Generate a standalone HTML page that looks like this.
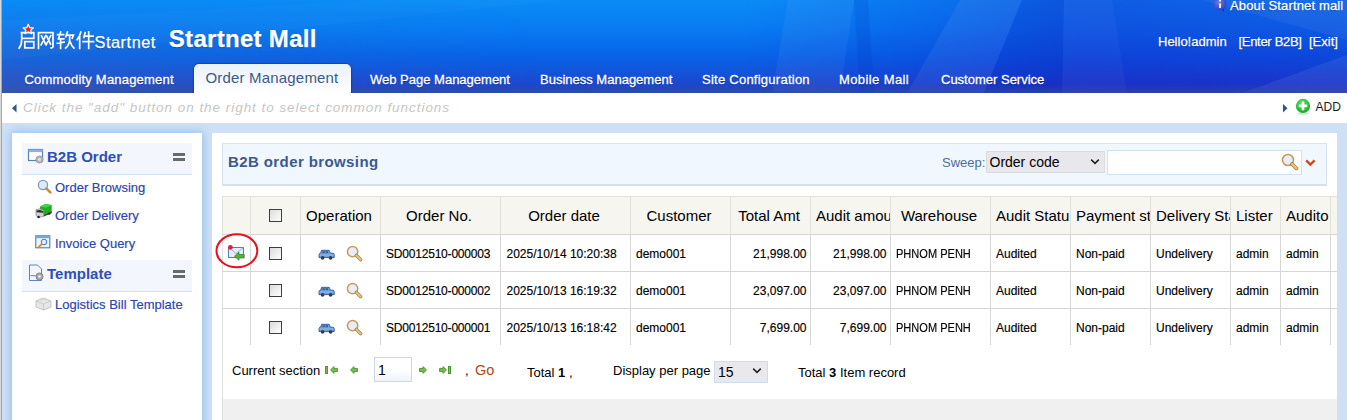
<!DOCTYPE html>
<html><head><meta charset="utf-8">
<style>
*{margin:0;padding:0;box-sizing:border-box}
html,body{width:1347px;height:420px;overflow:hidden}
body{position:relative;font-family:"Liberation Sans",sans-serif;background:#cbdef5;color:#000}
.a{position:absolute;white-space:nowrap;line-height:1}
#lstrip{left:0;top:0;width:2px;height:420px;background:linear-gradient(90deg,#d8d8d8 0,#d8d8d8 1px,#aaa8a6 1px)}
#hdr{left:2px;top:0;width:1345px;height:93px;background:linear-gradient(180deg,#0b8ff4 0%,#0a7eee 25%,#1468dc 55%,#2452c4 85%,#2b4cb6 100%);overflow:hidden}
.wt{color:#fff;text-shadow:0 1px 1px rgba(0,0,40,.35);-webkit-text-stroke:.25px #fff}
.nav{font-size:13px;color:#fff;text-shadow:0 1px 1px rgba(0,0,60,.4);top:73.3px;-webkit-text-stroke:.3px #fff}
#toolbar{left:2px;top:93px;width:1345px;height:30px;background:#fff}
#sidebar{left:12px;top:133px;width:190px;height:300px;background:#fff;box-shadow:0 0 9px 1px rgba(135,185,238,.85)}
#gap{display:none}
#lgap{display:none}
#topgap{left:2px;top:123px;width:1345px;height:297px;background:#cfe0f5}
#main{left:212px;top:133px;width:1125px;height:287px;background:#fff}
.sbh{position:absolute;left:22px;width:170px;height:32px;background:#f3f7fd;border-bottom:1px solid #d6e2f0}
.sbt{font-size:15px;font-weight:bold;color:#2e4fb8}
.sbi{font-size:13px;color:#2a44b0;-webkit-text-stroke:.15px #2a44b0}
.eq{position:absolute;width:12px;height:3px;background:#6a6a6a}
.th{font-size:15px;color:#000;text-align:center;overflow:hidden;padding:0 8px 0 5px}
.td{font-size:12px;color:#000;-webkit-text-stroke:.15px #000}
.cb{width:13px;height:13px;border:1px solid #3e3e3e;background:linear-gradient(135deg,#dcdcdc 0%,#f4f4f4 70%,#fff 100%)}
.pgt{font-size:13px;color:#000}
</style></head><body>
<div id="lstrip" class="a"></div>
<div id="hdr" class="a">
  <svg class="a" style="left:0;top:0" width="1345" height="93">
    <defs>
      <linearGradient id="hb" x1="0" y1="0" x2="0" y2="1">
        <stop offset="0" stop-color="#0a8cf6"/>
        <stop offset=".3" stop-color="#087cf2"/>
        <stop offset=".62" stop-color="#0862e6"/>
        <stop offset=".88" stop-color="#1a4ad0"/>
        <stop offset="1" stop-color="#2244bc"/>
      </linearGradient>
      <linearGradient id="hl" x1="0" y1="0" x2="1" y2="0">
        <stop offset="0" stop-color="#5070b0" stop-opacity=".38"/>
        <stop offset=".22" stop-color="#5070b0" stop-opacity=".12"/>
        <stop offset=".4" stop-color="#5070b0" stop-opacity="0"/>
      </linearGradient>
      <linearGradient id="hr" x1="0" y1="0" x2="1" y2="0">
        <stop offset=".55" stop-color="#0020d8" stop-opacity="0"/>
        <stop offset=".8" stop-color="#1808c0" stop-opacity=".36"/>
        <stop offset="1" stop-color="#1808c0" stop-opacity=".3"/>
      </linearGradient>
      <linearGradient id="hbot" x1="0" y1="0" x2="0" y2="1">
        <stop offset="0" stop-color="#3a5098" stop-opacity="0"/>
        <stop offset=".6" stop-color="#3a5098" stop-opacity=".3"/>
        <stop offset="1" stop-color="#3a5098" stop-opacity=".6"/>
      </linearGradient>
      <linearGradient id="vg" x1="0" y1="0" x2="0" y2="1"><stop offset="0" stop-color="#fff" stop-opacity="0"/><stop offset=".35" stop-color="#fff" stop-opacity=".3"/><stop offset="1" stop-color="#fff" stop-opacity="1"/></linearGradient>
      <mask id="vm"><rect x="0" y="0" width="1345" height="93" fill="url(#vg)"/></mask>
    </defs>
    <rect x="0" y="0" width="1345" height="93" fill="url(#hb)"/>
    <rect x="0" y="0" width="1345" height="93" fill="url(#hl)" mask="url(#vm)"/>
    <rect x="0" y="0" width="1345" height="93" fill="url(#hr)"/>
    <polygon points="0,20 380,0 560,0 0,60" fill="#ffffff" opacity=".025"/>
    <polygon points="786,0 852,0 838,93 770,93" fill="#ffffff" opacity=".05"/>
    <polygon points="852,0 866,0 872,93 858,93" fill="#0028b0" opacity=".14"/>
    <polygon points="958,0 1020,0 982,93 905,93" fill="#ffffff" opacity=".06"/>
    <polygon points="1020,0 1062,0 1060,93 982,93" fill="#0020b0" opacity=".12"/>
    <polygon points="1062,0 1110,0 1125,93 1060,93" fill="#ffffff" opacity=".035"/>
    <polygon points="1240,93 1345,55 1345,93" fill="#ffffff" opacity=".07"/>
    <polygon points="1200,0 1345,0 1345,40" fill="#ffffff" opacity=".05"/>
    <rect x="0" y="85" width="1345" height="8" fill="url(#hbot)"/>
  </svg>
  <!-- logo -->
  <svg class="a" style="left:14px;top:22px" width="80" height="30" viewBox="0 0 80 30">
    <g fill="none" stroke="#fff" stroke-width="1.75" stroke-linecap="square" transform="translate(2.5,9.5)" style="filter:drop-shadow(0 .6px .6px rgba(0,0,60,.35))">
      <!-- qi -->
      <path d="M3,1.2 H15.3 V6.8 H3.2 M3.2,1.2 V8 Q3.2,13.5 0.6,16.6 M6.3,10 H15.3 V16.3 H6.3 Z"/>
      <!-- wang -->
      <g transform="translate(19,0)"><path d="M1,16.8 V1 H15.5 V15 Q15.5,16.6 13.6,16.4 M4,4.5 L8,12.5 M8.2,4.2 L3.6,13.4 M9,4.5 L13,12.5 M13.2,4.2 L8.6,13.4"/></g>
      <!-- ruan -->
      <g transform="translate(38.5,0)"><path d="M0.6,3.2 H6.6 M3.6,0.6 L1.5,7.4 H6.8 M3.6,7.4 V16.8 M0.4,11.8 L7,10.6 M10.4,0.5 L8.8,5.2 M9.6,3.6 H16.4 L15.2,6.6 M12.6,3.8 V8.5 Q12.3,13.5 8.6,16.6 M12.8,9.5 Q14.3,14.2 17,16.6"/></g>
      <!-- jian -->
      <g transform="translate(58,0)"><path d="M4.4,0.5 Q3.2,5 0.6,8.2 M3.2,5.2 V16.8 M8.6,1.2 L7.4,6 M7.8,4.6 H16.6 M6.6,10.2 H17 M12.2,0.4 V16.8"/></g>
    </g>
    <!-- star -->
    <polygon transform="translate(-1.8,-.3) scale(1.08)" points="13,2.4 14.4,5.5 17.8,5.7 15.2,7.9 16.1,11.1 13,9.3 9.9,11.1 10.8,7.9 8.2,5.7 11.6,5.5" fill="#f21a1a" stroke="#fff" stroke-width="1.1" stroke-linejoin="round"/>
  </svg>
  <div class="a wt" style="left:92.5px;top:33.8px;font-size:16.3px;letter-spacing:.55px">Startnet</div>
  <div class="a wt" style="left:166.8px;top:26.7px;font-size:24px;font-weight:bold;letter-spacing:.3px">Startnet Mall</div>
  <!-- about -->
  <svg class="a" style="left:1209px;top:-4px" width="18" height="17" viewBox="0 0 18 17">
    <defs><radialGradient id="ig" cx=".42" cy=".4" r=".65"><stop offset="0" stop-color="#6c7ee8"/><stop offset=".8" stop-color="#3a4cc8"/><stop offset="1" stop-color="#2434a8"/></radialGradient></defs>
    <path d="M10.5,13.6 L13,16 L12.6,12.6 Z" fill="#1a2890"/>
    <circle cx="9" cy="7.8" r="6.4" fill="url(#ig)"/>
    <rect x="8.1" y="7.4" width="1.9" height="4.6" fill="#fbf6d8"/><rect x="8.1" y="3.4" width="1.9" height="2" fill="#ffffff"/>
  </svg>
  <div class="a wt" style="left:1228px;top:-1px;font-size:13px;letter-spacing:.15px">About Startnet mall</div>
  <div class="a wt" style="left:1156px;top:34.5px;font-size:13px">Hello!admin</div>
  <div class="a wt" style="left:1236.5px;top:34.5px;font-size:13px;letter-spacing:-.3px">[Enter B2B]</div>
  <div class="a wt" style="left:1307px;top:34.5px;font-size:13px">[Exit]</div>
  <!-- nav -->
  <div class="a nav" style="left:22.5px;letter-spacing:.2px">Commodity Management</div>
  <div class="a" style="left:191.5px;top:64px;width:157px;height:30px;border-radius:5px 5px 0 0;background:linear-gradient(180deg,#eaf1fb 0%,#f4f8fd 50%,#ffffff 100%);box-shadow:0 0 1px 1px rgba(20,40,110,.45)"></div>
  <div class="a" style="left:203.5px;top:70.3px;font-size:15px;letter-spacing:.18px;color:#3d5a86">Order Management</div>
  <div class="a nav" style="left:368px">Web Page Management</div>
  <div class="a nav" style="left:538px">Business Management</div>
  <div class="a nav" style="left:700px;letter-spacing:.25px">Site Configuration</div>
  <div class="a nav" style="left:837px;letter-spacing:.4px">Mobile Mall</div>
  <div class="a nav" style="left:939px">Customer Service</div>
</div>
<div id="toolbar" class="a">
  <svg class="a" style="left:10px;top:11px" width="5" height="9"><polygon points="4.5,0 4.5,8.5 0,4.25" fill="#2d5591"/></svg>
  <div class="a" style="left:21px;top:8.3px;font-size:13.5px;font-style:italic;letter-spacing:.96px;color:#c6c6c6">Click the "add" button on the right to select common functions</div>
  <svg class="a" style="left:1281px;top:11px" width="5" height="9"><polygon points="0,0 0,8.5 4.5,4.25" fill="#2d5591"/></svg>
  <svg class="a" style="left:1292px;top:5px" width="18" height="18" viewBox="0 0 18 18">
    <defs><radialGradient id="gg" cx=".45" cy=".35" r=".7"><stop offset="0" stop-color="#5ee85e"/><stop offset="1" stop-color="#0ca52a"/></radialGradient></defs>
    <ellipse cx="9" cy="15.5" rx="6" ry="1.5" fill="#000" opacity=".12"/>
    <circle cx="9" cy="7.9" r="7.1" fill="url(#gg)"/>
    <rect x="7.7" y="3.6" width="2.6" height="8.6" fill="#fff" rx=".4"/>
    <rect x="4.7" y="6.6" width="8.6" height="2.6" fill="#fff" rx=".4"/>
  </svg>
  <div class="a" style="left:1313.5px;top:7.5px;font-size:12px;color:#1a1a1a">ADD</div>
</div>
<div id="topgap" class="a"></div>
<div id="lgap" class="a"></div>
<div id="gap" class="a"></div>
<div id="sidebar" class="a"></div>
<div id="main" class="a"></div>

<!-- sidebar contents -->
<div class="sbh" style="top:143px"></div>
<svg class="a" style="left:27px;top:148px" width="18" height="16" viewBox="0 0 18 16">
  <rect x="1.5" y="1.5" width="14" height="11" fill="#fff" stroke="#5a7ec0" stroke-width="1.2"/>
  <rect x="1.5" y="1.5" width="14" height="2.6" fill="#8cb0e0"/>
  <circle cx="12.5" cy="11.5" r="3.6" fill="#b8b8b8" stroke="#909090" stroke-width=".8"/>
  <circle cx="12.5" cy="11.5" r="1.3" fill="#e8e8e8"/>
</svg>
<div class="a sbt" style="left:47px;top:149px">B2B Order</div>
<div class="eq" style="left:173px;top:153px"></div><div class="eq" style="left:173px;top:158px"></div>
<svg class="a" style="left:37px;top:179px" width="16" height="15" viewBox="0 0 16 15">
  <circle cx="6" cy="6" r="4.6" fill="#dfeaf8" stroke="#7a9ac8" stroke-width="1.3"/>
  <path d="M9.3,9.3 L13.3,13.3" stroke="#c88a3a" stroke-width="2.6" stroke-linecap="round"/>
</svg>
<div class="a sbi" style="left:55px;top:181px">Order Browsing</div>
<svg class="a" style="left:34px;top:202px" width="20" height="17" viewBox="0 0 20 17">
  <path d="M9.7,12 L17.7,9 V11.2 L9.7,14.4 Z" fill="#3a3a3a"/>
  <polygon points="6,4.6 11.4,2 17.7,3.1 17.7,9.7 9.7,13 6,11" fill="#1fae1f"/>
  <polygon points="6,4.6 11.4,2 17.7,3.1 12,5.8" fill="#46d246"/>
  <path d="M2,7.6 L6,6.8 L9.7,8.2 V14.6 L4,15.2 L2,13.6 Z" fill="#d0d0d0" stroke="#7a7a7a" stroke-width=".6"/>
  <path d="M2.5,8.6 L6,8 L9.4,9.2 V10.8 L2.5,10.2 Z" fill="#2e2e2e"/>
  <circle cx="4.6" cy="15" r="1.3" fill="#222"/><circle cx="15.2" cy="11.6" r="1.2" fill="#222"/>
</svg>
<div class="a sbi" style="left:55px;top:209px">Order Delivery</div>
<svg class="a" style="left:35px;top:235px" width="16" height="14" viewBox="0 0 16 14">
  <rect x=".8" y=".8" width="14" height="12" fill="#eef4fc" stroke="#4a78c0" stroke-width="1.1"/>
  <rect x=".8" y=".8" width="14" height="2.4" fill="#7aa4dc"/>
  <circle cx="9" cy="7" r="2.8" fill="#dfeeff" stroke="#3a78c8" stroke-width="1"/>
  <path d="M7,9 L3.5,12" stroke="#d89020" stroke-width="1.8"/>
</svg>
<div class="a sbi" style="left:55px;top:237px">Invoice Query</div>
<div class="sbh" style="top:260px"></div>
<svg class="a" style="left:28px;top:264px" width="17" height="18" viewBox="0 0 17 18">
  <path d="M1.5,1 H9.5 L13.5,5 V16.5 H1.5 Z" fill="#f2f6fc" stroke="#5a86c8" stroke-width="1"/>
  <rect x="2.5" y="11" width="5" height="1.2" fill="#6a9ad8"/>
  <circle cx="11.5" cy="12.5" r="3.6" fill="#a8a8a8" stroke="#777" stroke-width=".8"/>
  <circle cx="11.5" cy="12.5" r="1.3" fill="#eee"/>
</svg>
<div class="a sbt" style="left:47px;top:266px">Template</div>
<div class="eq" style="left:173px;top:270px"></div><div class="eq" style="left:173px;top:275px"></div>
<svg class="a" style="left:35px;top:296px" width="17" height="15" viewBox="0 0 17 15">
  <path d="M1,5 L8.5,2 L16,5 V11 L8.5,14 L1,11 Z" fill="#e6e6e6" stroke="#b8b8b8" stroke-width=".8"/>
  <path d="M1,5 L8.5,8 L16,5 M8.5,8 V14" fill="none" stroke="#c4c4c4" stroke-width=".8"/>
  <ellipse cx="6" cy="3.6" rx="2" ry="1" fill="#d4d4d4"/><ellipse cx="11" cy="3.6" rx="2" ry="1" fill="#d4d4d4"/>
</svg>
<div class="a sbi" style="left:55px;top:298px">Logistics Bill Template</div>

<!-- main contents -->
<svg width="0" height="0" style="position:absolute">
  <defs>
    <g id="car">
      <path d="M2.6,4.2 L3.6,1.3 H11.2 L12.3,4.2 H15 Q16.2,4.3 16.2,5.6 V8.6 H1 V5.6 Q1,4.3 2.6,4.2 Z" fill="#6aa0de" stroke="#285a9c" stroke-width=".9"/>
      <path d="M1.6,6 H15.6" stroke="#9cc4f0" stroke-width=".8"/>
      <rect x="4.4" y="2.2" width="2.4" height="1.9" fill="#3c5f8a"/><rect x="7.6" y="2.2" width="2.4" height="1.9" fill="#3c5f8a"/>
      <circle cx="4.6" cy="8.9" r="1.8" fill="#3a3a3a"/><circle cx="12.6" cy="8.9" r="1.8" fill="#3a3a3a"/>
    </g>
    <g id="mag">
      <circle cx="6.6" cy="6.6" r="5.2" fill="#e6eef9" stroke="#c89a5a" stroke-width="1.5"/>
      <path d="M10.4,10.4 L14.6,14.6" stroke="#a87838" stroke-width="3.4" stroke-linecap="round"/>
      <path d="M10.4,10.4 L14.6,14.6" stroke="#e2c88a" stroke-width="2" stroke-linecap="round"/>
    </g>
    <g id="pg"><path d="M0.6,4 L3.9,0.6 V2.4 H7.4 V5.6 H3.9 V7.4 Z" fill="#78bc4c" stroke="#4e9a30" stroke-width="1"/></g>
  </defs>
</svg>
<div class="a" style="left:222px;top:143px;width:1105px;height:42.5px;background:#f1f7fe;border:1px solid #d6e4f3;border-bottom:2px solid #d3e1f1"></div>
<div class="a" style="left:228px;top:154px;font-size:15px;font-weight:bold;color:#3b5a8e;letter-spacing:.4px">B2B order browsing</div>
<div class="a" style="left:942px;top:156px;font-size:13px;color:#4d6c9c">Sweep:</div>
<div class="a" style="left:986px;top:151px;width:119px;height:22px;background:#e8e7eb;border:1px solid #dcdcdf"></div>
<div class="a" style="left:989.5px;top:154.5px;font-size:14px;color:#000">Order code</div>
<svg class="a" style="left:1090px;top:158px" width="10" height="8"><path d="M1.2,1.6 L5,5.4 L8.8,1.6" fill="none" stroke="#222" stroke-width="1.5"/></svg>
<div class="a" style="left:1107px;top:150px;width:195px;height:25px;background:#fff;border:1px solid #d4e2f0"></div>
<svg class="a" style="left:1281px;top:153px" width="18" height="18" viewBox="0 0 17 17"><use href="#mag"/></svg>
<svg class="a" style="left:1305px;top:159px" width="11" height="8"><path d="M1.2,1.4 L5.3,5.6 L9.6,1.4" fill="none" stroke="#e0420e" stroke-width="2.4"/></svg>
<div class="a" style="left:222px;top:196px;width:1115px;height:38px;background:#f6f5f0;border-top:1px solid #e4e2dc"></div>
<div class="a" style="left:222px;top:196px;width:1px;height:38px;background:#e2e0da"></div>
<div class="a" style="left:250px;top:196px;width:1px;height:38px;background:#e2e0da"></div>
<div class="a" style="left:300px;top:196px;width:1px;height:38px;background:#e2e0da"></div>
<div class="a" style="left:380px;top:196px;width:1px;height:38px;background:#e2e0da"></div>
<div class="a" style="left:500px;top:196px;width:1px;height:38px;background:#e2e0da"></div>
<div class="a" style="left:630px;top:196px;width:1px;height:38px;background:#e2e0da"></div>
<div class="a" style="left:730px;top:196px;width:1px;height:38px;background:#e2e0da"></div>
<div class="a" style="left:810px;top:196px;width:1px;height:38px;background:#e2e0da"></div>
<div class="a" style="left:890px;top:196px;width:1px;height:38px;background:#e2e0da"></div>
<div class="a" style="left:990px;top:196px;width:1px;height:38px;background:#e2e0da"></div>
<div class="a" style="left:1070px;top:196px;width:1px;height:38px;background:#e2e0da"></div>
<div class="a" style="left:1150px;top:196px;width:1px;height:38px;background:#e2e0da"></div>
<div class="a" style="left:1230px;top:196px;width:1px;height:38px;background:#e2e0da"></div>
<div class="a" style="left:1280px;top:196px;width:1px;height:38px;background:#e2e0da"></div>
<div class="a" style="left:1330px;top:196px;width:1px;height:38px;background:#e2e0da"></div>
<div class="a" style="left:222px;top:234px;width:1px;height:111px;background:#e2e0da"></div>
<div class="a" style="left:250px;top:234px;width:1px;height:111px;background:#d6d6d6"></div>
<div class="a" style="left:300px;top:234px;width:1px;height:111px;background:#d6d6d6"></div>
<div class="a" style="left:380px;top:234px;width:1px;height:111px;background:#d6d6d6"></div>
<div class="a" style="left:500px;top:234px;width:1px;height:111px;background:#d6d6d6"></div>
<div class="a" style="left:630px;top:234px;width:1px;height:111px;background:#d6d6d6"></div>
<div class="a" style="left:730px;top:234px;width:1px;height:111px;background:#d6d6d6"></div>
<div class="a" style="left:810px;top:234px;width:1px;height:111px;background:#d6d6d6"></div>
<div class="a" style="left:890px;top:234px;width:1px;height:111px;background:#d6d6d6"></div>
<div class="a" style="left:990px;top:234px;width:1px;height:111px;background:#d6d6d6"></div>
<div class="a" style="left:1070px;top:234px;width:1px;height:111px;background:#d6d6d6"></div>
<div class="a" style="left:1150px;top:234px;width:1px;height:111px;background:#d6d6d6"></div>
<div class="a" style="left:1230px;top:234px;width:1px;height:111px;background:#d6d6d6"></div>
<div class="a" style="left:1280px;top:234px;width:1px;height:111px;background:#d6d6d6"></div>
<div class="a" style="left:1330px;top:234px;width:1px;height:111px;background:#d6d6d6"></div>
<div class="a" style="left:222px;top:234px;width:1115px;height:1px;background:#d6d6d6"></div>
<div class="a" style="left:222px;top:271px;width:1115px;height:1px;background:#d6d6d6"></div>
<div class="a" style="left:222px;top:308px;width:1115px;height:1px;background:#d6d6d6"></div>
<div class="a th" style="left:301px;top:208.3px;width:79px;">Operation</div>
<div class="a th" style="left:381px;top:208.3px;width:119px;">Order No.</div>
<div class="a th" style="left:501px;top:208.3px;width:129px;">Order date</div>
<div class="a th" style="left:631px;top:208.3px;width:99px;">Customer</div>
<div class="a th" style="left:731px;top:208.3px;width:79px;">Total Amt</div>
<div class="a th" style="left:811px;top:208.3px;width:79px;">Audit amount</div>
<div class="a th" style="left:891px;top:208.3px;width:99px;">Warehouse</div>
<div class="a th" style="left:991px;top:208.3px;width:79px;">Audit Status</div>
<div class="a th" style="left:1071px;top:208.3px;width:79px;">Payment status</div>
<div class="a th" style="left:1151px;top:208.3px;width:79px;">Delivery Status</div>
<div class="a th" style="left:1231px;top:208.3px;width:49px;">Lister</div>
<div class="a th" style="left:1281px;top:208.3px;width:49px;">Audito</div>
<div class="a cb" style="left:269px;top:209px"></div>
<div class="a cb" style="left:269px;top:247px"></div>
<svg class="a" style="left:318px;top:249px" width="17" height="11" viewBox="0 0 17 11"><use href="#car"/></svg>
<svg class="a" style="left:346px;top:245px" width="17" height="17" viewBox="0 0 17 17"><use href="#mag"/></svg>
<div class="a td" style="left:386px;top:247.7px;letter-spacing:-.2px">SD0012510-000003</div>
<div class="a td" style="left:506.5px;top:247.7px">2025/10/14 10:20:38</div>
<div class="a td" style="left:636px;top:247.7px">demo001</div>
<div class="a td" style="left:731px;top:247.7px;width:75.5px;text-align:right">21,998.00</div>
<div class="a td" style="left:811px;top:247.7px;width:75.5px;text-align:right">21,998.00</div>
<div class="a td" style="left:896px;top:247.7px;transform:scaleX(.92);transform-origin:0 0">PHNOM PENH</div>
<div class="a td" style="left:996px;top:247.7px">Audited</div>
<div class="a td" style="left:1076px;top:247.7px">Non-paid</div>
<div class="a td" style="left:1156px;top:247.7px">Undelivery</div>
<div class="a td" style="left:1236px;top:247.7px">admin</div>
<div class="a td" style="left:1286px;top:247.7px">admin</div>
<div class="a cb" style="left:269px;top:284px"></div>
<svg class="a" style="left:318px;top:286px" width="17" height="11" viewBox="0 0 17 11"><use href="#car"/></svg>
<svg class="a" style="left:346px;top:282px" width="17" height="17" viewBox="0 0 17 17"><use href="#mag"/></svg>
<div class="a td" style="left:386px;top:284.7px;letter-spacing:-.2px">SD0012510-000002</div>
<div class="a td" style="left:506.5px;top:284.7px">2025/10/13 16:19:32</div>
<div class="a td" style="left:636px;top:284.7px">demo001</div>
<div class="a td" style="left:731px;top:284.7px;width:75.5px;text-align:right">23,097.00</div>
<div class="a td" style="left:811px;top:284.7px;width:75.5px;text-align:right">23,097.00</div>
<div class="a td" style="left:896px;top:284.7px;transform:scaleX(.92);transform-origin:0 0">PHNOM PENH</div>
<div class="a td" style="left:996px;top:284.7px">Audited</div>
<div class="a td" style="left:1076px;top:284.7px">Non-paid</div>
<div class="a td" style="left:1156px;top:284.7px">Undelivery</div>
<div class="a td" style="left:1236px;top:284.7px">admin</div>
<div class="a td" style="left:1286px;top:284.7px">admin</div>
<div class="a cb" style="left:269px;top:321px"></div>
<svg class="a" style="left:318px;top:323px" width="17" height="11" viewBox="0 0 17 11"><use href="#car"/></svg>
<svg class="a" style="left:346px;top:319px" width="17" height="17" viewBox="0 0 17 17"><use href="#mag"/></svg>
<div class="a td" style="left:386px;top:321.7px;letter-spacing:-.2px">SD0012510-000001</div>
<div class="a td" style="left:506.5px;top:321.7px">2025/10/13 16:18:42</div>
<div class="a td" style="left:636px;top:321.7px">demo001</div>
<div class="a td" style="left:731px;top:321.7px;width:75.5px;text-align:right">7,699.00</div>
<div class="a td" style="left:811px;top:321.7px;width:75.5px;text-align:right">7,699.00</div>
<div class="a td" style="left:896px;top:321.7px;transform:scaleX(.92);transform-origin:0 0">PHNOM PENH</div>
<div class="a td" style="left:996px;top:321.7px">Audited</div>
<div class="a td" style="left:1076px;top:321.7px">Non-paid</div>
<div class="a td" style="left:1156px;top:321.7px">Undelivery</div>
<div class="a td" style="left:1236px;top:321.7px">admin</div>
<div class="a td" style="left:1286px;top:321.7px">admin</div>
<!-- mail icon + ellipse -->
<svg class="a" style="left:214px;top:232px" width="46" height="38" viewBox="0 0 46 38">
  <rect x="14.5" y="15.5" width="15" height="10" fill="#e4eefb" stroke="#4a80c8" stroke-width="1"/>
  <path d="M14.5,15.5 L22,21.5 L29.5,15.5" fill="none" stroke="#8ab0e0" stroke-width=".9"/>
  <path d="M20.5,24.2 L25,20.2 V22.5 H30.2 V26 H25 V28.3 Z" fill="#5cae3c" stroke="#2f7a20" stroke-width=".7"/>
  <circle cx="16.4" cy="15.3" r="2.4" fill="#e0204a"/>
  <ellipse cx="22.9" cy="18.8" rx="20.4" ry="16.5" fill="none" stroke="#e8101c" stroke-width="2"/>
</svg>
<!-- pagination -->
<div class="a" style="left:222px;top:345px;width:1px;height:75px;background:#e2e0da"></div>
<div class="a" style="left:223px;top:399px;width:1114px;height:21px;background:#f0f0f0"></div>
<div class="a pgt" style="left:232px;top:364px">Current section</div>
<div class="a" style="left:325px;top:366px;width:3px;height:8px;background:#78bc4c;border:1px solid #4e9a30"></div>
<svg class="a" style="left:329.5px;top:366px" width="8" height="8"><use href="#pg"/></svg>
<svg class="a" style="left:349.5px;top:366px" width="8" height="8"><use href="#pg"/></svg>
<div class="a" style="left:374px;top:357px;width:37.5px;height:24.5px;background:linear-gradient(180deg,#fff 0%,#fff 50%,#eef3fa 100%);border:1px solid #c9d9ec"></div>
<div class="a pgt" style="left:378px;top:363px;font-size:14px">1</div>
<svg class="a" style="left:418.5px;top:366px" width="8" height="8"><g transform="translate(8,0) scale(-1,1)"><use href="#pg"/></g></svg>
<svg class="a" style="left:438.5px;top:366px" width="8" height="8"><g transform="translate(8,0) scale(-1,1)"><use href="#pg"/></g></svg>
<div class="a" style="left:448px;top:366px;width:3px;height:8px;background:#78bc4c;border:1px solid #4e9a30"></div>
<div class="a pgt" style="left:465px;top:364px">,</div>
<div class="a" style="left:475px;top:363px;font-size:14.5px;color:#b0481c">Go</div>
<div class="a pgt" style="left:527px;top:366px">Total <b>1</b> ,</div>
<div class="a pgt" style="left:613px;top:364px">Display per page</div>
<div class="a" style="left:714px;top:361px;width:54px;height:21.5px;background:#e9e8ec;border:1px solid #cfdcea"></div>
<div class="a" style="left:718px;top:365px;font-size:14px">15</div>
<svg class="a" style="left:752px;top:367px" width="10" height="8"><path d="M1.2,1.6 L5,5.4 L8.8,1.6" fill="none" stroke="#222" stroke-width="1.5"/></svg>
<div class="a pgt" style="left:798px;top:366px">Total <b>3</b> Item record</div>

</body></html>
